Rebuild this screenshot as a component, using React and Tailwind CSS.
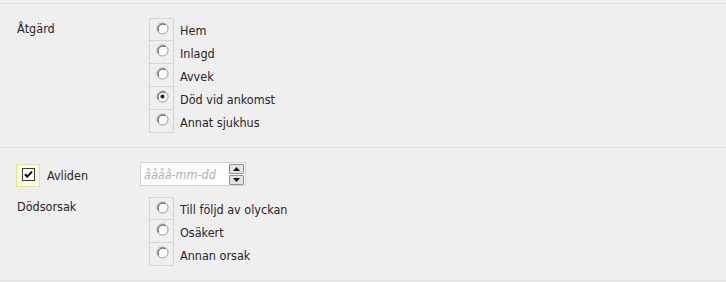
const font = { fontFamily: '"DejaVu Sans Condensed", "DejaVu Sans", sans-serif' };

const Radio = ({ checked }) => (
  <svg width="13" height="13" viewBox="0 0 13 13">
    <circle cx="6.5" cy="6.5" r="5.5" fill="#ffffff" stroke="#9a9a9a" />
    <path d="M2.6 9.4 A5 5 0 0 1 9.4 2.6" fill="none" stroke="#4a4a4a" strokeWidth="1" />
    {checked && <circle cx="6.5" cy="6.5" r="2" fill="#111111" />}
  </svg>
);

const RadioList = ({ items, selected }) => (
  <div className="flex flex-col">
    {items.map((item, i) => (
      <div key={item} className="flex h-[23px] items-start">
        <div
          className={`flex h-[23px] w-[25px] items-center justify-center border-x border-b border-[#d7d7d7] ${
            i === 0 ? 'border-t' : ''
          }`}
        >
          <span className="-mt-[3px] ml-px flex">
            <Radio checked={item === selected} />
          </span>
        </div>
        <span className="ml-[6px] pt-[5px] text-[12.5px] leading-[15px] text-[#2b232b]">{item}</span>
      </div>
    ))}
  </div>
);

const App = () => {
  return (
    <div className="h-[282px] w-[726px] bg-[#efefef] pt-[3px]" style={font}>
      <section className="flex border-t border-[#e2e2e2] pb-[14px] pt-[14px]">
        <div className="w-[149px] pl-[17px] pt-[3px] text-[12.5px] leading-[15px] text-[#2b232b]">Åtgärd</div>
        <RadioList items={['Hem', 'Inlagd', 'Avvek', 'Död vid ankomst', 'Annat sjukhus']} selected="Död vid ankomst" />
      </section>

      <section className="border-y border-[#e2e2e2] pb-[14px] pt-[14px]">
        <div className="flex h-[24px] items-center">
          <div className="ml-[16px] mt-[2px] flex h-[23px] w-[24px] items-center justify-center border border-[#f0e27a] bg-[#fdfbe4]">
            <svg width="13" height="13" viewBox="0 0 13 13" className="-mt-[2px]">
              <rect x="0.5" y="0.5" width="12" height="12" fill="#ffffff" stroke="#3c3c3c" />
              <path d="M3 6.2 L5.3 8.6 L10 3.6" fill="none" stroke="#000000" strokeWidth="2" />
            </svg>
          </div>
          <span className="ml-[7px] mt-[3px] w-[93px] text-[12.5px] leading-[15px] text-[#2b232b]">Avliden</span>
          <div className="flex h-[24px] w-[106px] items-center border border-[#d4d4d4] bg-white pl-[3px] pr-[1px]">
            <span className="flex-1 text-[12.5px] italic leading-[15px] text-[#b0b0b0]">åååå-mm-dd</span>
            <div className="flex flex-col gap-px">
              <div className="flex h-[10px] w-[15px] items-center justify-center rounded-[1px] border border-[#8f8f8f] bg-[#e4e4e4]">
                <svg width="7" height="4" viewBox="0 0 7 4">
                  <path d="M0 4 L3.5 0 L7 4 Z" fill="#111111" />
                </svg>
              </div>
              <div className="flex h-[10px] w-[15px] items-center justify-center rounded-[1px] border border-[#8f8f8f] bg-[#e4e4e4]">
                <svg width="7" height="4" viewBox="0 0 7 4">
                  <path d="M0 0 L7 0 L3.5 4 Z" fill="#111111" />
                </svg>
              </div>
            </div>
          </div>
        </div>
        <div className="mt-[11px] flex">
          <div className="w-[149px] pl-[17px] pt-[2px] text-[12.5px] leading-[15px] text-[#2b232b]">Dödsorsak</div>
          <RadioList items={['Till följd av olyckan', 'Osäkert', 'Annan orsak']} />
        </div>
      </section>
    </div>
  );
};

export default App;
